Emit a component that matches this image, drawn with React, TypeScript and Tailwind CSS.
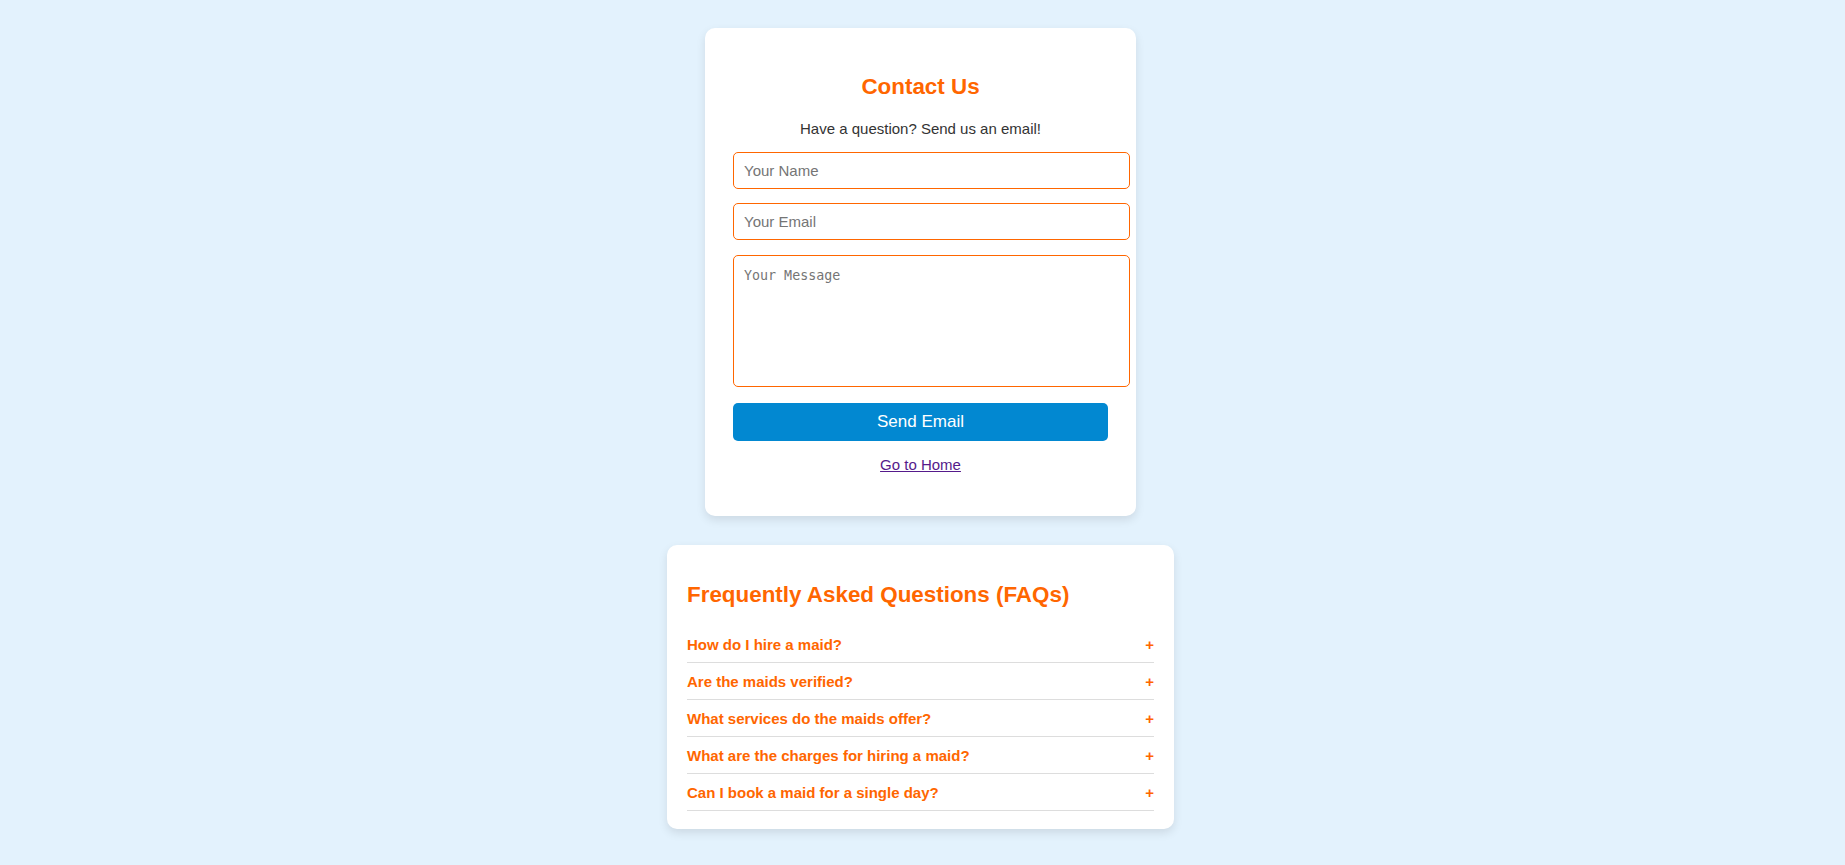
import { useState } from "react";

const faqs = [
  "How do I hire a maid?",
  "Are the maids verified?",
  "What services do the maids offer?",
  "What are the charges for hiring a maid?",
  "Can I book a maid for a single day?",
];

export default function App() {
  const [open, setOpen] = useState<number | null>(null);

  return (
    <div className="min-h-screen w-full bg-[#e3f2fd] font-['Liberation_Sans',Arial,sans-serif] flex flex-col items-center pt-[28px] pb-[35px]">
      {/* contact card */}
      <div className="w-[431px] mr-[4px] bg-white rounded-[10px] shadow-[0_4px_10px_rgba(0,0,0,0.1)] px-[28px] pt-[46px] pb-[43px]">
        <h2 className="text-[22.4px] leading-[25px] font-bold text-[#ff6600] text-center">
          Contact Us
        </h2>
        <p className="text-[15px] leading-[17px] text-[#333] text-center mt-[21px]">
          Have a question? Send us an email!
        </p>
        <input
          type="text"
          placeholder="Your Name"
          className="block box-border w-[397px] h-[37px] mt-[15px] px-[10px] border border-[#ff6600] rounded-[5px] text-[15px] text-[#333] placeholder:text-[#757575] outline-none"
        />
        <input
          type="email"
          placeholder="Your Email"
          className="block box-border w-[397px] h-[37px] mt-[14px] px-[10px] border border-[#ff6600] rounded-[5px] text-[15px] text-[#333] placeholder:text-[#757575] outline-none"
        />
        <textarea
          placeholder="Your Message"
          className="block box-border w-[397px] h-[132px] mt-[15px] p-[10px] border border-[#ff6600] rounded-[5px] font-['DejaVu_Sans_Mono',monospace] text-[13.33px] text-[#333] placeholder:text-[#757575] outline-none resize-none"
        />
        <button className="block w-full h-[38px] mt-[16px] bg-[#0288d1] text-white text-[17px] rounded-[5px]">
          Send Email
        </button>
        <div className="text-center mt-[15px] text-[15px] leading-[17px]">
          <a href="#" className="text-[#551a8b] underline">
            Go to Home
          </a>
        </div>
      </div>

      {/* faq card */}
      <div className="w-[507px] mr-[4px] mt-[29px] bg-white rounded-[10px] shadow-[0_4px_10px_rgba(0,0,0,0.1)] px-[20px] pt-[37px] pb-[18px]">
        <h2 className="text-[22.4px] leading-[25px] font-bold text-[#ff6600]">
          Frequently Asked Questions (FAQs)
        </h2>
        <div className="mt-[19px]">
          {faqs.map((q, i) => (
            <div
              key={q}
              onClick={() => setOpen(open === i ? null : i)}
              className="flex items-center justify-between pt-[10px] pb-[9px] border-b border-[#ddd] cursor-pointer"
            >
              <span className="text-[15px] leading-[17px] font-bold text-[#ff6600]">{q}</span>
              <span className="text-[15px] leading-[17px] font-bold text-[#ff6600]">+</span>
            </div>
          ))}
        </div>
      </div>
    </div>
  );
}
